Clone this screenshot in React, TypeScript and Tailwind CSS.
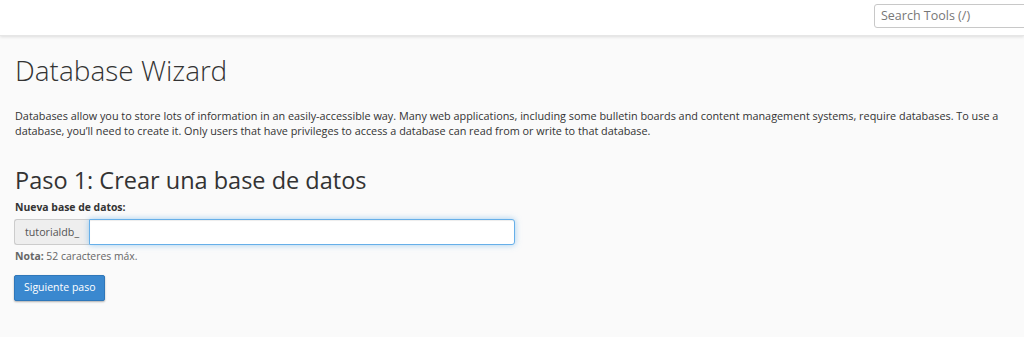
import React from 'react';

const font = { fontFamily: '"Open Sans", "Noto Sans", sans-serif' };

const SearchBar: React.FC = () => (
  <div className="h-9 bg-white shadow-[0_1px_3px_rgba(0,0,0,0.12)] border-b border-[#e6e6e6] flex justify-end overflow-hidden relative z-10">
    <div className="w-[162px] shrink-0 mr-[-12px] pt-[2px]">
      <input
        type="text"
        placeholder="Search Tools (/)"
        className="w-full h-[24px] rounded-[3px] border border-[#c8c8c8] px-[6px] text-[12.5px] text-[#333] placeholder:text-[#777] outline-none bg-white"
      />
    </div>
  </div>
);

export default function App() {
  return (
    <div className="w-[1024px] h-[337px] bg-[#fafafa] overflow-hidden text-[#333]" style={font}>
      <SearchBar />
      <div className="px-[15px]">
        <h1
          className="mt-[18px] text-[28px] leading-[33px] font-light text-[#333]"
          style={{ fontFamily: '"Open Sans Light", "Open Sans", sans-serif' }}
        >
          Database Wizard
        </h1>
        <p className="mt-[21px] text-[10.85px] leading-[15px] text-[#333]">
          Databases allow you to store lots of information in an easily-accessible way. Many web applications, including some bulletin boards and content management systems, require databases. To use a database, you’ll need to create it. Only users that have privileges to access a database can read from or write to that database.
        </p>
        <h2 className="mt-[29px] text-[23.5px] leading-[26px] font-normal text-[#333]">Paso 1: Crear una base de datos</h2>
        <label className="block mt-[7px] text-[10.4px] font-bold leading-[15px] text-[#333]">Nueva base de datos:</label>
        <div className="flex mt-[4px] w-[501px] h-[26px] -ml-px">
          <span className="flex items-center h-full px-[10px] bg-[#eeeeee] border border-[#cccccc] border-r-0 rounded-l-[3px] text-[10.7px] text-[#555]">
            tutorialdb_
          </span>
          <input
            type="text"
            className="flex-1 h-full rounded-r-[3px] border border-[#66afe9] bg-white px-2 text-[12px] outline-none shadow-[inset_0_1px_1px_rgba(0,0,0,0.075),0_0_6px_rgba(102,175,233,0.6)]"
          />
        </div>
        <p className="mt-[4px] text-[10.4px] leading-[15px] text-[#666]">
          <strong className="font-bold">Nota:</strong> 52 caracteres máx.
        </p>
        <button className="mt-[11px] -ml-px h-[26px] px-[9px] rounded-[2px] bg-[#3a88cf] border border-[#2f77b9] text-white text-[10.5px] shadow-[0_1px_2px_rgba(0,0,0,0.3)]">
          Siguiente paso
        </button>
      </div>
    </div>
  );
}
